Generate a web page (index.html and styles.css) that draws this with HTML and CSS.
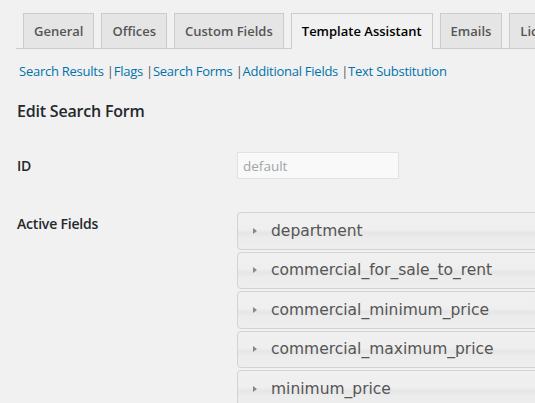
FILE: index.html
```html
<!DOCTYPE html>
<html>
<head>
<meta charset="utf-8">
<link rel="stylesheet" href="styles.css">
</head>
<body>
<div class="wrap">
  <nav class="tabs">
    <a class="tab">General</a>
    <a class="tab">Offices</a>
    <a class="tab">Custom Fields</a>
    <a class="tab active">Template Assistant</a>
    <a class="tab">Emails</a>
    <a class="tab">Licence</a>
  </nav>
  <ul class="subnav">
    <li><a>Search Results</a> |</li>
    <li><a>Flags</a> |</li>
    <li><a>Search Forms</a> |</li>
    <li><a>Additional Fields</a> |</li>
    <li><a>Text Substitution</a></li>
  </ul>
  <h2 class="title">Edit Search Form</h2>
  <div class="row row-id">
    <div class="label">ID</div>
    <div class="field"><input class="input" type="text" value="default" disabled></div>
  </div>
  <div class="row row-fields">
    <div class="label">Active Fields</div>
    <div class="field">
      <div class="acc">
        <div class="acc-item"><span class="tri"></span><span class="acc-text">department</span></div>
        <div class="acc-item"><span class="tri"></span><span class="acc-text">commercial_for_sale_to_rent</span></div>
        <div class="acc-item"><span class="tri"></span><span class="acc-text">commercial_minimum_price</span></div>
        <div class="acc-item"><span class="tri"></span><span class="acc-text">commercial_maximum_price</span></div>
        <div class="acc-item"><span class="tri"></span><span class="acc-text">minimum_price</span></div>
      </div>
    </div>
  </div>
</div>
</body>
</html>
```
FILE: styles.css
```css
html, body {
  margin: 0;
  padding: 0;
  background: #f1f1f1;
  overflow: hidden;
}
body {
  font-family: "Open Sans", "Noto Sans", sans-serif;
  color: #23282d;
  width: 535px;
  height: 403px;
}
.wrap {
  padding: 13px 0 0 16px;
  width: 700px;
}
.tabs {
  display: flex;
  border-bottom: 1px solid #ccc;
  padding-left: 7px;
  height: 35px;
  gap: 7px;
}
.tab {
  display: block;
  box-sizing: border-box;
  height: 35px;
  padding: 0 10px;
  border: 1px solid #ccc;
  border-bottom: none;
  background: #e5e5e5;
  color: #555;
  font-size: 13px;
  font-weight: 600;
  line-height: 34px;
  white-space: nowrap;
}
.tab.active {
  background: #f1f1f1;
  color: #000;
  height: 36px;
  margin-bottom: -1px;
}
.subnav {
  list-style: none;
  margin: 0;
  padding: 0 0 0 3px;
  display: flex;
  height: 44px;
  align-items: center;
  font-size: 13px;
  color: #555;
  letter-spacing: -0.25px;
}
.subnav li {
  white-space: pre;
}
.subnav li a {
  color: #0073aa;
}
.title {
  margin: 6px 0 0 0;
  font-size: 16px;
  font-weight: 600;
  line-height: 24px;
  padding-left: 1px;
  letter-spacing: -0.2px;
}
.row {
  display: flex;
}
.label {
  width: 220px;
  padding-left: 1px;
  font-size: 14px;
  font-weight: 600;
  color: #23282d;
  letter-spacing: -0.2px;
}
.row-id {
  margin-top: 29px;
  align-items: center;
}
.input {
  box-sizing: border-box;
  width: 162px;
  height: 27px;
  margin: 0;
  border: 1px solid #e2e2e2;
  background: #f9f9f9;
  color: #a0a5aa;
  font-family: "Open Sans", "Noto Sans", sans-serif;
  font-size: 13.5px;
  padding: 0 5px;
}
.row-fields {
  margin-top: 33px;
}
.row-fields .label {
  padding-top: 3px;
  line-height: 18px;
}
.acc {
  width: 330px;
}
.acc-item {
  box-sizing: border-box;
  height: 37.5px;
  margin-bottom: 2px;
  border: 1px solid #d3d3d3;
  border-radius: 4px;
  background: linear-gradient(to bottom, #f0f0f0 0%, #efefef 45%, #e6e6e6 55%, #ececec 70%, #eeeeee 100%);
  display: flex;
  align-items: center;
  padding-left: 15px;
}
.tri {
  width: 0;
  height: 0;
  border-top: 3.5px solid transparent;
  border-bottom: 3.5px solid transparent;
  border-left: 4px solid #888;
  margin-right: 14px;
}
.acc-text {
  font-family: "DejaVu Sans", Verdana, sans-serif;
  font-size: 15.5px;
  color: #555;
}
```
